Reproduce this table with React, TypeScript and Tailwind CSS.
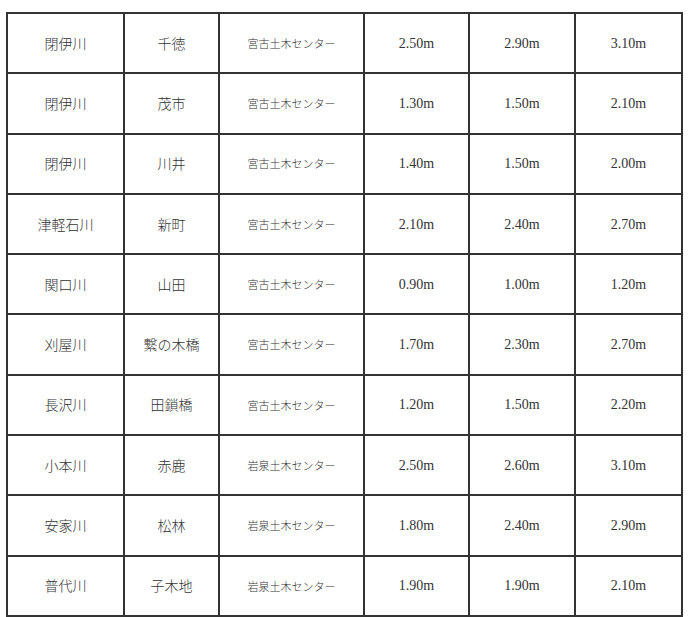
const rows: [string, string, string, string, string, string][] = [
  ['閉伊川', '千徳', '宮古土木センター', '2.50m', '2.90m', '3.10m'],
  ['閉伊川', '茂市', '宮古土木センター', '1.30m', '1.50m', '2.10m'],
  ['閉伊川', '川井', '宮古土木センター', '1.40m', '1.50m', '2.00m'],
  ['津軽石川', '新町', '宮古土木センター', '2.10m', '2.40m', '2.70m'],
  ['関口川', '山田', '宮古土木センター', '0.90m', '1.00m', '1.20m'],
  ['刈屋川', '繋の木橋', '宮古土木センター', '1.70m', '2.30m', '2.70m'],
  ['長沢川', '田鎖橋', '宮古土木センター', '1.20m', '1.50m', '2.20m'],
  ['小本川', '赤鹿', '岩泉土木センター', '2.50m', '2.60m', '3.10m'],
  ['安家川', '松林', '岩泉土木センター', '1.80m', '2.40m', '2.90m'],
  ['普代川', '子木地', '岩泉土木センター', '1.90m', '1.90m', '2.10m'],
];

const jp = "font-['Noto_Sans_CJK_JP',sans-serif] font-light";
const num = "font-['Liberation_Serif','Noto_Sans_CJK_JP',serif]";

export default function App() {
  return (
    <div className="w-[690px] h-[617px] bg-white pl-[6px] pt-[12px]">
      <table className="table-fixed border-collapse w-[675px] text-[#333]">
        <colgroup>
          <col className="w-[117px]" />
          <col className="w-[95px]" />
          <col className="w-[145px]" />
          <col className="w-[105px]" />
          <col className="w-[106px]" />
          <col className="w-[107px]" />
        </colgroup>
        <tbody>
          {rows.map((r, i) => (
            <tr key={i} className="h-[60.3px]">
              <td className={`border-2 border-[#333] text-center text-[14px] ${jp}`}>{r[0]}</td>
              <td className={`border-2 border-[#333] text-center text-[14px] ${jp}`}>{r[1]}</td>
              <td className={`border-2 border-[#333] text-center text-[11px] ${jp}`}>{r[2]}</td>
              <td className={`border-2 border-[#333] text-center text-[14px] ${num}`}>{r[3]}</td>
              <td className={`border-2 border-[#333] text-center text-[14px] ${num}`}>{r[4]}</td>
              <td className={`border-2 border-[#333] text-center text-[14px] ${num}`}>{r[5]}</td>
            </tr>
          ))}
        </tbody>
      </table>
    </div>
  );
}
